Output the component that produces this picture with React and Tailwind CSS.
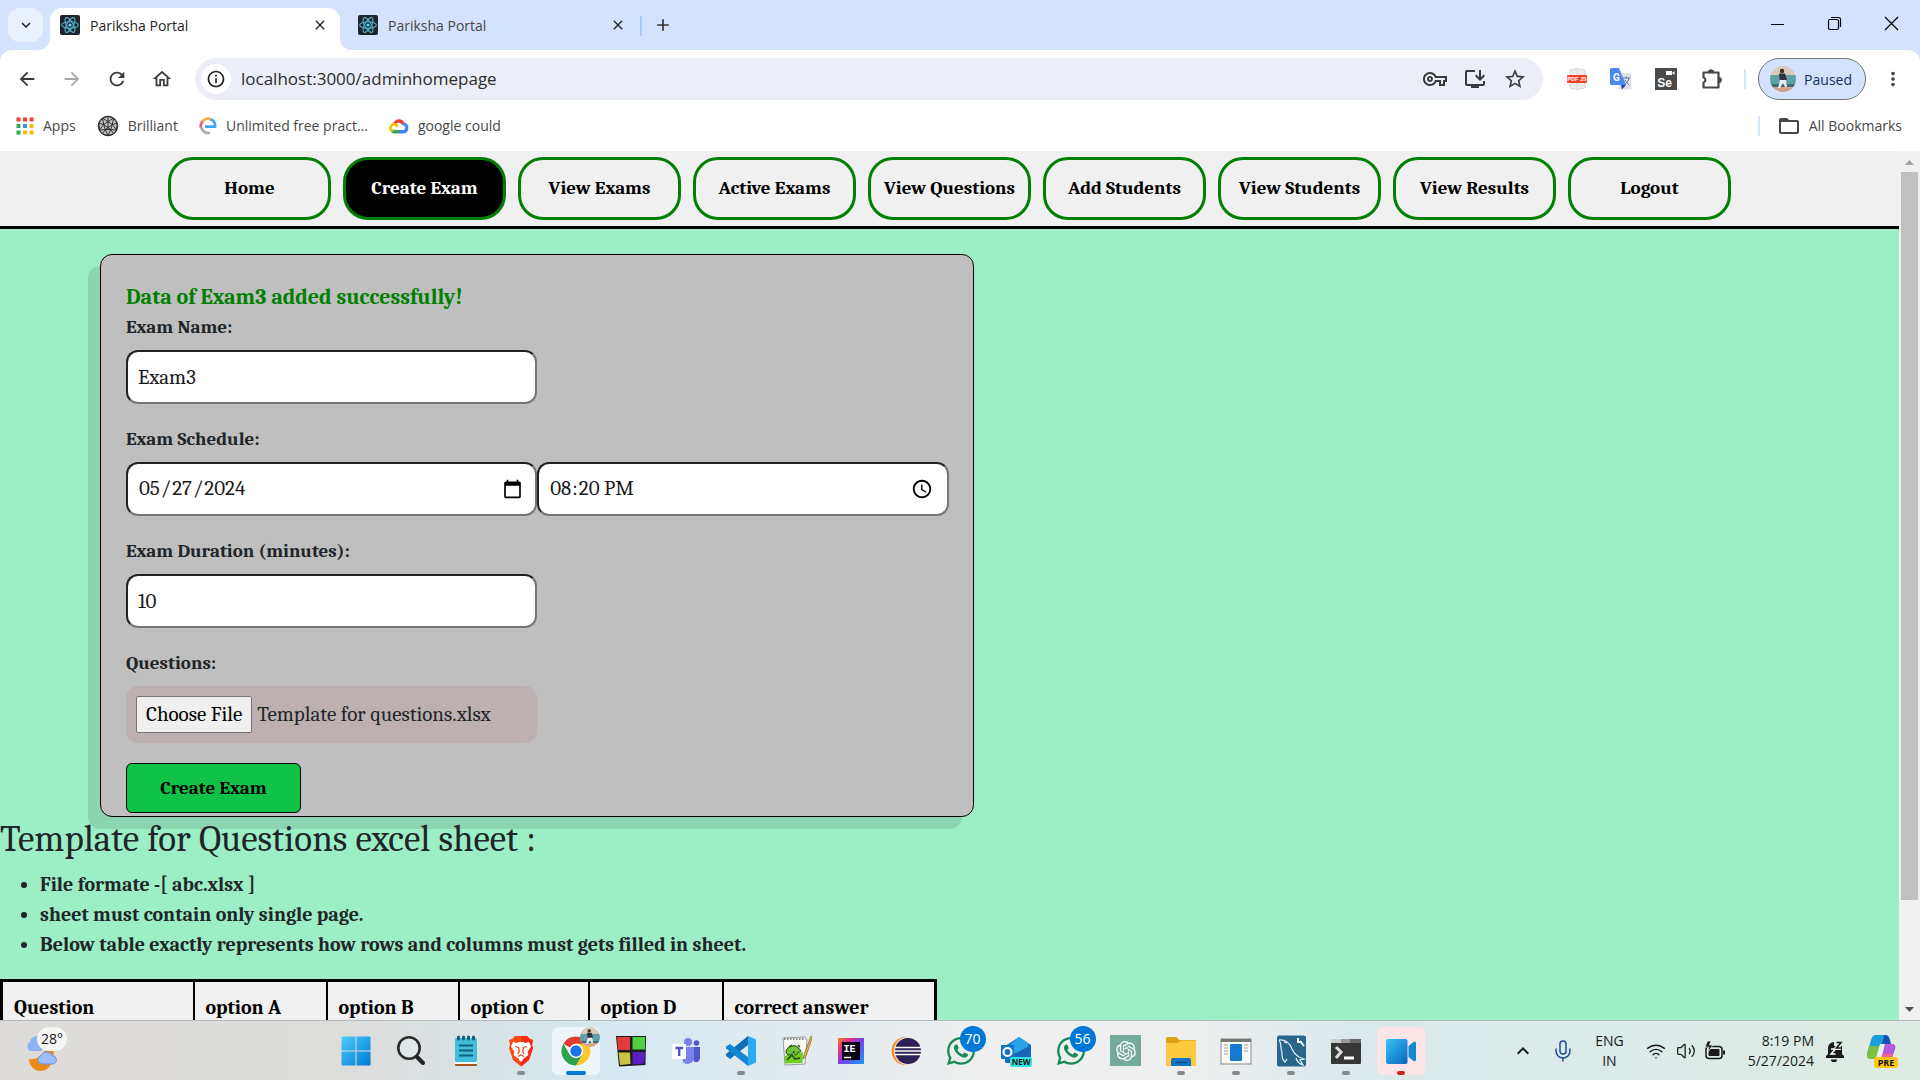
import React from "react";
import {
  MdArrowBack, MdArrowForward, MdRefresh, MdOutlineHome, MdInfoOutline, MdOutlineVpnKey,
  MdInstallDesktop, MdStarBorder, MdMoreVert, MdFolderOpen, MdClose, MdAdd,
  MdKeyboardArrowDown, MdKeyboardArrowUp,
} from "react-icons/md";
import { FaWhatsapp } from "react-icons/fa";
import { RiOpenaiFill } from "react-icons/ri";
import { Mic, Wifi, Volume2 } from "lucide-react";

const ReactFavicon = () => (
  <svg viewBox="0 0 20 20" className="size-5 shrink-0" aria-hidden="true">
    <rect width="20" height="20" rx="2" fill="#20232a" />
    <g fill="none" stroke="#4fb4cf" strokeWidth="1.1">
      <ellipse cx="10" cy="10" rx="8.3" ry="3.2" />
      <ellipse cx="10" cy="10" rx="8.3" ry="3.2" transform="rotate(60 10 10)" />
      <ellipse cx="10" cy="10" rx="8.3" ry="3.2" transform="rotate(120 10 10)" />
    </g>
    <circle cx="10" cy="10" r="1.6" fill="#61dafb" />
  </svg>
);

const AppsIcon = () => {
  const colors = ["#ea4335", "#ea4335", "#ea4335", "#34a853", "#4285f4", "#fbbc04", "#34a853", "#fbbc04", "#fbbc04"];
  return (
    <svg viewBox="0 0 18 18" className="size-[18px]" aria-hidden="true">
      {colors.map((c, i) => (
        <rect key={i} x={(i % 3) * 6.5 + 0.5} y={Math.floor(i / 3) * 6.5 + 0.5} width="4" height="4" fill={c} />
      ))}
    </svg>
  );
};

const BrilliantIcon = () => (
  <svg viewBox="0 0 22 22" className="size-[22px]" fill="none" stroke="#222" strokeWidth="0.9" aria-hidden="true">
    <circle cx="11" cy="11" r="9.8" fill="#c4c4c4" />
    <path d="M11 6.5l4.300 3.100-1.600 5H8.300l-1.600-5zM11 1.400v5.100M20 8l-4.700 1.600M16.600 18.800l-2.900-4.200M5.400 18.800l2.900-4.200M2 8l4.700 1.600M5.500 3.300L11 6.500l5.500-3.200M19.500 15l-4.200-5.400 1.200-6.300M11 20.500l2.700-5.900L19.500 15M2.500 15l5.800-.4 2.700 5.900M5.500 3.300l1.200 6.300L2.500 15" />
    <path d="M11 6.500v8M6.700 9.600l7 5M15.300 9.600l-7 5M2 8l3.500-4.700L11 1.400l5.500 1.900L20 8l-.5 7-2.900 3.800-5.600 1.700-5.600-1.700L2.500 15z" />
  </svg>
);

const EIcon = () => (
  <svg viewBox="0 0 18 18" className="size-[18px]" fill="none" strokeWidth="2.7" aria-hidden="true">
    <path d="M2 11A7 7 0 0 1 4 4" stroke="#ee5a8c" />
    <path d="M3.500 4.500A7 7 0 0 1 12 2.300" stroke="#fbb03b" />
    <path d="M11.500 2.200A7 7 0 0 1 16 9.600H6" stroke="#3fa9f5" />
    <path d="M2.200 10.500A7 7 0 0 0 11 15.700" stroke="#b3a9b0" />
  </svg>
);

const CloudIcon = () => (
  <svg viewBox="0 0 20 17" className="h-[17px] w-5" aria-hidden="true">
    <path d="M4.500 6A6 6 0 0 1 15.300 5.400L12.800 7.800A3.500 3.500 0 0 0 7 6.800z" fill="#ea4335" />
    <path d="M15.300 5.400A5.700 5.700 0 0 1 14.700 16.500H10v-3.600h4.700A2.200 2.200 0 0 0 15.300 9l-2.500-1.300z" fill="#4285f4" />
    <path d="M10 16.500H5.400a5.400 5.400 0 0 1-3.200-1L4.700 12.700l5.300.2z" fill="#34a853" />
    <path d="M2.200 15.500A5.400 5.400 0 0 1 4.500 6c2.200-.1 4 .8 5.200 2.700L7.300 11A2.200 2.200 0 1 0 4.700 12.900z" fill="#fbbc04" />
  </svg>
);

const PdfIcon = () => (
  <svg viewBox="0 0 20 22" className="h-[22px] w-5" aria-hidden="true">
    <path d="M3 2l7-1.500L18 2v18l-8 1.500L3 20z" fill="#ededed" stroke="#d8d8d8" />
    <path d="M10 1v20" stroke="#dcdcdc" />
    <rect x="0" y="7" width="20" height="8" rx="1" fill="#f0422a" />
    <text x="10" y="13" fontSize="5.500" fontWeight="700" fill="#fff" textAnchor="middle" fontFamily="Liberation Sans">PDF JS</text>
  </svg>
);

const TranslateIcon = () => (
  <svg viewBox="0 0 22 22" className="size-[22px]" aria-hidden="true">
    <rect x="9" y="5" width="12.500" height="16.500" rx="1" fill="#dfe3e8" />
    <path d="M11 17h5l-4 4.500z" fill="#3040b0" />
    <path d="M1.500 0H9l7 17H1.500A1.500 1.500 0 0 1 0 15.500v-14A1.500 1.500 0 0 1 1.500 0z" fill="#4a87f0" />
    <text x="6.500" y="12.500" fontSize="10" fontWeight="700" fill="#fff" textAnchor="middle" fontFamily="Roboto">G</text>
    <path d="M13 10h7M16.500 8.500V10M19 10c-.5 3-2.500 5-4 6M15 12c1 2 3 4 4.500 5" stroke="#5b7c99" fill="none" />
  </svg>
);

const SeleniumIcon = () => (
  <svg viewBox="0 0 22 22" className="size-[22px]" aria-hidden="true">
    <rect width="22" height="22" fill="#4a4a4a" />
    <path d="M11 3h6v4h-6zM17 5l2.500-2v4z" fill="#fff" />
    <text x="9.500" y="19" fontSize="12" fontWeight="700" fill="#fff" textAnchor="middle" fontFamily="Liberation Sans">Se</text>
  </svg>
);

const ExtensionIcon = () => (
  <svg viewBox="0 0 24 24" className="size-6" fill="none" stroke="currentColor" strokeWidth="2.200" strokeLinejoin="round" aria-hidden="true">
    <path d="M3.500 5.500H9a2 2 0 0 1 4 0h5.500V11a2 2 0 0 1 0 4v5.500h-15v-5a2.600 2.600 0 0 0 0-5z" />
    <path d="M9 5.500a2 2 0 0 1 4 0zM18.500 11a2 2 0 0 1 0 4z" fill="currentColor" />
  </svg>
);

const Avatar = ({ className }) => (
  <svg viewBox="0 0 26 26" className={className} aria-hidden="true">
    <clipPath id="avatar-clip"><circle cx="13" cy="13" r="13" /></clipPath>
    <g clipPath="url(#avatar-clip)">
      <rect width="26" height="26" fill="#d8c9b8" />
      <rect y="9" width="26" height="9" fill="#5fa0a6" />
      <rect y="18" width="26" height="3" fill="#3c6c74" />
      <rect y="21" width="26" height="5" fill="#d2a58b" />
      <circle cx="12" cy="5" r="2.200" fill="#3a2a26" />
      <path d="M9 7.500h6l2 6-4 2h-3z" fill="#2b3440" />
      <path d="M10 14h6l1 7h-2l-2-4-3 5H8z" fill="#e8ecef" />
    </g>
  </svg>
);

const BrowserTab = ({ active }) => (
  <div className={active ? "relative mt-2 flex h-[42px] w-[290px] items-center rounded-t-xl bg-white pb-2 pl-[10px] pr-3" : "mt-2 flex h-[42px] w-[300px] items-center pb-2 pl-[18px] pr-[14px]"}>
    {active && (
      <>
        <span className="absolute -left-3 bottom-0 size-3 overflow-hidden bg-white"><span className="block size-full rounded-br-xl bg-[#d3e2fd]" /></span>
        <span className="absolute -right-3 bottom-0 size-3 overflow-hidden bg-white"><span className="block size-full rounded-bl-xl bg-[#d3e2fd]" /></span>
      </>
    )}
    <ReactFavicon />
    <span className={active ? "ml-[10px] flex-1 text-[14px] text-[#1f1f1f]" : "ml-[10px] flex-1 text-[14px] text-[#474747]"}>Pariksha Portal</span>
    <button aria-label="Close tab" className="text-[#222]"><MdClose className="size-4" /></button>
  </div>
);

const Bookmark = ({ icon, children }) => (
  <a href="#" className="flex items-center gap-[9px]">{icon}<span>{children}</span></a>
);

const BrowserChrome = () => (
  <header className="shrink-0 bg-[#d3e2fd] font-['Open_Sans',sans-serif]">
    <div className="flex h-[50px] items-start">
      <button aria-label="Search tabs" className="ml-2 mr-[7px] mt-2 flex h-[34px] w-[35px] items-center justify-center rounded-xl bg-[#e9f1fe] text-[#1f1f1f]">
        <MdKeyboardArrowDown className="size-[18px]" />
      </button>
      <BrowserTab active />
      <BrowserTab />
      <span className="mt-4 h-5 w-[2px] bg-[#a8c7fa]" />
      <button aria-label="New tab" className="ml-[11px] mt-[15px] text-[#333]"><MdAdd className="size-5" /></button>
      <div className="ml-auto mt-4 flex gap-[42px] pr-[21px] text-black">
        <button aria-label="Minimize"><svg viewBox="0 0 15 15" className="size-[15px]" fill="none" stroke="currentColor"><path d="M1 8.500h13" /></svg></button>
        <button aria-label="Restore"><svg viewBox="0 0 15 15" className="size-[15px]" fill="none" stroke="currentColor" strokeWidth="1.200"><rect x="1.500" y="3.500" width="10" height="10" rx="1.500" /><path d="M4 1.500h7.500a2 2 0 0 1 2 2V11" /></svg></button>
        <button aria-label="Close window"><svg viewBox="0 0 15 15" className="size-[15px]" fill="none" stroke="currentColor" strokeWidth="1.200"><path d="M1 1l13 13M14 1L1 14" /></svg></button>
      </div>
    </div>
    <div className="rounded-t-xl bg-white">
      <div className="flex items-center pl-4 pr-4 pt-2">
        <nav aria-label="Browser" className="flex gap-[23px] text-[#3a3a3a]">
          <button aria-label="Back"><MdArrowBack className="size-[22px]" /></button>
          <button aria-label="Forward" className="text-[#a8a8a8]"><MdArrowForward className="size-[22px]" /></button>
          <button aria-label="Reload"><MdRefresh className="size-[22px]" /></button>
          <button aria-label="Home"><MdOutlineHome className="size-[22px]" /></button>
        </nav>
        <div className="ml-[22px] flex h-[42px] flex-1 items-center rounded-full bg-[#ebeef7] pl-[6px] pr-4 text-[#3a3a3a]">
          <span className="flex size-[30px] items-center justify-center rounded-full bg-white text-[#1f1f1f]"><MdInfoOutline className="size-5" /></span>
          <input aria-label="Address" defaultValue="localhost:3000/adminhomepage" className="ml-[10px] flex-1 bg-transparent text-[17px] text-[#2c2c2c] outline-none" />
          <div className="flex gap-4">
            <MdOutlineVpnKey className="size-6" />
            <MdInstallDesktop className="size-6" />
            <MdStarBorder className="size-6" />
          </div>
        </div>
        <div className="ml-6 flex items-center gap-[23px] text-[#474747]">
          <PdfIcon /><TranslateIcon /><SeleniumIcon /><ExtensionIcon />
        </div>
        <span className="ml-5 h-5 w-[2px] bg-[#d3e2fd]" />
        <button className="ml-3 flex h-[42px] items-center gap-2 rounded-full border border-[#747775] bg-[#d3e2fd] pl-[11px] pr-[13px] text-[14px] text-[#12305f]">
          <Avatar className="size-[26px]" />Paused
        </button>
        <button aria-label="Menu" className="ml-4 text-[#474747]"><MdMoreVert className="size-[22px]" /></button>
      </div>
      <div className="flex h-[51px] items-center gap-[21px] pl-4 pr-[18px] text-[14px] text-[#474747]">
        <Bookmark icon={<AppsIcon />}>Apps</Bookmark>
        <Bookmark icon={<BrilliantIcon />}>Brilliant</Bookmark>
        <Bookmark icon={<EIcon />}>Unlimited free pract...</Bookmark>
        <Bookmark icon={<CloudIcon />}>google could</Bookmark>
        <span className="ml-auto h-5 w-[2px] bg-[#d3e2fd]" />
        <a href="#" className="-ml-1 flex items-center gap-2"><MdFolderOpen className="size-6" />All Bookmarks</a>
      </div>
    </div>
  </header>
);

const navItems = ["Home", "Create Exam", "View Exams", "Active Exams", "View Questions", "Add Students", "View Students", "View Results", "Logout"];

const PortalNav = () => (
  <nav aria-label="Portal" className="flex justify-center gap-3 border-b-[3px] border-black bg-[#f0f0f0] py-[6px]">
    {navItems.map((item) => (
      <button key={item} className={item === "Create Exam"
        ? "h-[63px] w-[163px] whitespace-nowrap rounded-[25px] border-[3px] border-[#008000] bg-black text-[19px] font-bold text-white"
        : "h-[63px] w-[163px] whitespace-nowrap rounded-[25px] border-[3px] border-[#008000] text-[19px] font-bold text-black"}>
        {item}
      </button>
    ))}
  </nav>
);

const fieldClass = "h-[54px] w-1/2 rounded-xl border-2 border-b-[#767676] border-l-[#212121] border-r-[#767676] border-t-[#212121] bg-white px-[10px] text-[21px] text-[#1a1a1a]";

const ExamForm = () => (
  <form onSubmit={(e) => e.preventDefault()} className="ml-[100px] mt-[25px] w-[46%] rounded-xl border border-black bg-[#bebfbe] pb-[3px] pl-[25px] pr-6 pt-[26px] shadow-[-12px_12px_0_0_rgba(0,0,0,0.1)]">
    <p className="text-[22px] font-bold leading-[32px] text-[#008000]">Data of Exam3 added successfully!</p>
    <label htmlFor="exam-name" className="mb-2 block text-[19px] font-bold leading-[29px]">Exam Name:</label>
    <input id="exam-name" defaultValue="Exam3" className={fieldClass} />
    <label htmlFor="exam-date" className="mb-2 mt-[21px] block text-[19px] font-bold leading-[29px]">Exam Schedule:</label>
    <div className="flex">
      <input id="exam-date" type="date" defaultValue="2024-05-27" className={fieldClass} />
      <input aria-label="Exam time" type="time" defaultValue="20:20" className={fieldClass} />
    </div>
    <label htmlFor="exam-duration" className="mb-2 mt-[21px] block text-[19px] font-bold leading-[29px]">Exam Duration (minutes):</label>
    <input id="exam-duration" defaultValue="10" className={fieldClass} />
    <label htmlFor="exam-file" className="mb-2 mt-[21px] block text-[19px] font-bold leading-[29px]">Questions:</label>
    <label className="relative flex h-[57px] w-1/2 items-center gap-[5px] rounded-xl bg-[#bcb1b0] px-[10px] text-[21px]">
      <input id="exam-file" type="file" className="sr-only" />
      <span className="flex h-[37px] items-center whitespace-nowrap rounded-[2px] border border-[#767676] bg-[#efefef] px-[9px] text-black">Choose File</span>
      <span className="whitespace-nowrap">Template for questions.xlsx</span>
    </label>
    <button className="mt-5 block h-[50px] w-[175px] rounded-md border border-black bg-[#10c245] text-[19px] font-bold text-black">Create Exam</button>
  </form>
);

const TemplateHelp = () => (
  <section>
    <h2 className="text-[37px] leading-[44px]">Template for Questions excel sheet :</h2>
    <ul className="mt-[9px] list-disc pl-10 text-[20px] font-bold leading-[30px]">
      <li>File formate -[ abc.xlsx ]</li>
      <li>sheet must contain only single page.</li>
      <li>Below table exactly represents how rows and columns must gets filled in sheet.</li>
    </ul>
    <table className="mt-[19px] w-[937px] table-fixed border-collapse border-[3px] border-black text-left text-[20px] text-black">
      <thead>
        <tr className="bg-[#f1f1f1]">
          <th className="w-[192px] border-2 border-black px-[11px] py-[11px]">Question</th>
          <th className="w-[133px] border-2 border-black px-[11px] py-[11px]">option A</th>
          <th className="w-[132px] border-2 border-black px-[11px] py-[11px]">option B</th>
          <th className="w-[130px] border-2 border-black px-[11px] py-[11px]">option C</th>
          <th className="w-[134px] border-2 border-black px-[11px] py-[11px]">option D</th>
          <th className="border-2 border-black px-[11px] py-[11px]">correct answer</th>
        </tr>
      </thead>
    </table>
  </section>
);

const ScrollBar = () => (
  <div className="flex w-[21px] shrink-0 flex-col items-center bg-[#f1f1f1]" aria-hidden="true">
    <svg viewBox="0 0 21 21" className="size-[21px]"><path d="M6 14l4.500-5 4.500 5z" fill="#a3a3a3" /></svg>
    <div className="flex w-full flex-1 flex-col px-[2px]">
      <div className="w-full grow-[88] bg-[#c1c1c1]" />
      <div className="grow-[12]" />
    </div>
    <svg viewBox="0 0 21 21" className="size-[21px]"><path d="M6 8l4.500 5L15 8z" fill="#505050" /></svg>
  </div>
);

const Svg = ({ children }) => <svg viewBox="0 0 32 32" className="size-8" aria-hidden="true">{children}</svg>;

const StartIcon = () => (
  <Svg>
    <defs><linearGradient id="win" x1="0" y1="0" x2="1" y2="1"><stop stopColor="#4bccfb" /><stop offset="1" stopColor="#0078d4" /></linearGradient></defs>
    <path d="M1.500 2.500a1 1 0 0 1 1-1h13v14h-14zM16.500 1.500h13a1 1 0 0 1 1 1v13h-14zM1.500 16.500h14v14h-13a1 1 0 0 1-1-1zM16.500 16.500h14v13a1 1 0 0 1-1 1h-13z" fill="url(#win)" />
  </Svg>
);
const SearchIcon = () => <Svg><circle cx="14" cy="13" r="10.700" fill="#e1e8eb" stroke="#2a2a2a" strokeWidth="2.600" /><path d="M22 22l6 6" stroke="#222" strokeWidth="4" strokeLinecap="round" /></Svg>;
const NotepadIcon = () => (
  <Svg>
    <rect x="5" y="27" width="22" height="4" rx="1" fill="#a3561b" /><rect x="5" y="26" width="22" height="3" fill="#fff" />
    <rect x="5" y="3" width="22" height="24" rx="1.500" fill="#42bddb" />
    <path d="M8.500 2v2M13.500 2v2M18.500 2v2M23.500 2v2" stroke="#126080" strokeWidth="3" strokeLinecap="round" />
    <path d="M9 10.500h14M9 15.500h14M9 20.500h14" stroke="#0b617d" strokeWidth="2" />
  </Svg>
);
const BraveIcon = () => (
  <Svg>
    <path d="M10 1h12l3 3 3 1-1 5 1 3-4 12-8 6.500L8 25 4 13l1-3-1-5 3-1z" fill="#fb4a14" />
    <path d="M16 1h6l3 3 3 1-1 5 1 3-4 12-8 6.500z" fill="#f52c14" />
    <path d="M8 7l4 1 2-1h4l2 1 4-1 2 4.500-3.500 5.500 1 3-4 3-3.500 2-3.500-2-4-3 1-3L6 11.500z" fill="#fff" />
    <path d="M10 11.500l3.500 1 .8 4-1.500 2.500M22 11.500l-3.500 1-.8 4 1.500 2.500M13 21.500l3-1.500 3 1.500" fill="none" stroke="#f5401a" strokeWidth="1.300" />
    <path d="M13.500 24.500L16 23.500l2.500 1L16 27z" fill="#fff" />
  </Svg>
);
const ChromeIcon = () => (
  <span className="relative block size-8">
    <Svg>
      <path d="M16 16L3.400 8.700A14.500 14.500 0 0 1 28.600 8.700H16z" fill="#e33b2e" />
      <path d="M16 9h12.600A14.500 14.500 0 0 1 16 30.500l6.300-11z" fill="#fdc629" />
      <path d="M3.400 8.700A14.500 14.500 0 0 0 16 30.500l6.300-10.900-6.300 3.500-6.300-3.500z" fill="#2da14c" />
      <circle cx="16" cy="16" r="7.200" fill="#fff" /><circle cx="16" cy="16" r="5.700" fill="#1b73e8" />
    </Svg>
    <Avatar className="absolute -right-2 -top-2 size-5" />
  </span>
);
const BlocksIcon = () => (
  <Svg>
    <path d="M1 1h30l-.5 29L4 31.500z" fill="#1d1a1a" />
    <path d="M2 2h13v13H3z" fill="#de3b3b" /><path d="M17.500 2H30v12.500H17.500z" fill="#4fd044" />
    <path d="M3.500 17.500H15l.5 11.500L5 30z" fill="#c9c341" /><path d="M17.500 17H30l-.5 11.500-12 1z" fill="#5a1fc0" />
  </Svg>
);
const TeamsIcon = () => (
  <Svg>
    <circle cx="18" cy="7" r="4" fill="#7b83eb" /><circle cx="26.500" cy="8" r="2.800" fill="#5059c9" />
    <path d="M20 12h10v10a4 4 0 0 1-6 4.500z" fill="#5059c9" /><path d="M11 12h13v11a6.500 6.500 0 0 1-11 4z" fill="#7b83eb" />
    <rect x="2" y="9" width="14" height="15" rx="1" fill="#fff" /><path d="M5.500 13h7.500M9.200 13v8" stroke="#4b53bc" strokeWidth="2.300" />
  </Svg>
);
const CodeIcon = () => (
  <Svg>
    <path d="M23 1v9L5 24l-4-3v-2z" fill="#0e70b8" /><path d="M1 11.500L5 9l18 13v9L1 13.500z" fill="#1587d0" />
    <path d="M23 1l8 3.500v23L23 31z" fill="#2aaaf2" />
  </Svg>
);
const NotepadPlusIcon = () => (
  <Svg>
    <path d="M3 3l22-1 2 3-2 24-20 1z" fill="#f7f7f3" stroke="#999" />
    <path d="M5 21c7-3 13-2 18-4l-.5 11L5 28.500z" fill="#6fce1b" />
    <path d="M6 17c0-6 11-9 13-3 3 1 2 4-1 3-1 5-5 3-4-1-2 5-8 5-8 1z" fill="#71c437" stroke="#23420d" />
    <path d="M7 25l5-5 3 4 5-1M9 12l3-2M18 10l2 2" stroke="#23420d" strokeWidth="1.300" fill="none" />
    <path d="M4 4h20" stroke="#666" strokeWidth="1.500" strokeDasharray="1.500 1.500" />
    <path d="M31 1L24 20l-1 4 3-3L32.500 2z" fill="#e3b44c" stroke="#8b5d1c" strokeWidth=".7" />
  </Svg>
);
const IdeaIcon = () => (
  <Svg>
    <defs><linearGradient id="idea" x1="0" y1="0" x2="1" y2="1"><stop stopColor="#fb7b26" /><stop offset=".25" stopColor="#e8308a" /><stop offset=".5" stopColor="#7a3ee8" /><stop offset="1" stopColor="#139af5" /></linearGradient></defs>
    <rect x="3" y="3" width="26" height="26" fill="url(#idea)" /><rect x="7" y="7" width="18" height="18" fill="#090212" />
    <text x="8.500" y="17" fontSize="10" fontWeight="700" fill="#fff" fontFamily="Liberation Mono">IE</text>
    <path d="M9 22.500h7" stroke="#fff" strokeWidth="1.500" />
  </Svg>
);
const EclipseIcon = () => <Svg><circle cx="15.500" cy="16" r="14" fill="#f7941e" /><circle cx="18" cy="16" r="14" fill="#e9e6ee" /><circle cx="18" cy="16" r="13" fill="#2c2255" /><path d="M5 12.500h26M5 16h26M5 19.500h26" stroke="#fff" strokeWidth="1.700" /></Svg>;
const WhatsappBadge = ({ count }) => (
  <span className="relative block size-8">
    <FaWhatsapp className="size-8 text-[#178b54]" />
    <span className="absolute -right-[9px] -top-[9px] flex size-[26px] items-center justify-center rounded-full bg-[#0078d7] text-[14px] text-white">{count}</span>
  </span>
);
const OutlookIcon = () => (
  <Svg>
    <path d="M5 11L19 2l12 8v17H5z" fill="#1674c5" /><path d="M9 11L19 2l9 6v10H9z" fill="#2ba2e8" /><path d="M13 20l18-10v18H5z" fill="#1666b5" />
    <rect x="1" y="10" width="13" height="14" rx="1" fill="#1173c7" /><circle cx="7.500" cy="17" r="4" fill="none" stroke="#fff" strokeWidth="2.200" />
    <rect x="10" y="22" width="22" height="10" rx="2" fill="#30e5df" /><text x="21" y="29.800" fontSize="8" fontWeight="700" textAnchor="middle" fill="#111" fontFamily="Open Sans">NEW</text>
  </Svg>
);
const GptIcon = () => <span className="flex size-[31px] items-center justify-center bg-[#74aa9c]"><RiOpenaiFill className="size-6 text-white" /></span>;
const FolderIcon = () => (
  <Svg>
    <path d="M1 3.500A1.500 1.500 0 0 1 2.500 2h9L14 5h17v7H1z" fill="#dda116" /><path d="M1 8h12l3-2.500h15V31H1z" fill="#fcc93f" />
    <path d="M6 31v-6a2 2 0 0 1 2-2h16a2 2 0 0 1 2 2v6z" fill="#1274c8" /><path d="M10 27.500h12" stroke="#0b4b8a" strokeWidth="1.500" />
  </Svg>
);
const WindowIcon = () => (
  <Svg>
    <rect x="1" y="4" width="30" height="25" fill="#fafafa" stroke="#8a8a8a" /><rect x="1" y="4" width="30" height="3" fill="#777" />
    <path d="M4 10h4M4 13h4M4 16h4M4 19h4M24 10h4M24 13h4M24 16h4" stroke="#999" /><rect x="10" y="9" width="12" height="17" rx="1" fill="#1779cf" />
  </Svg>
);
const MysqlIcon = () => (
  <Svg>
    <rect x="2" y="0.500" width="29" height="31" rx="2" fill="#28668c" />
    <path d="M4 5c6-1 11 3 13 9 2 5 4 6 7 8l5 2-4 1 3 5c-3-1-6-3-7-7M4 5c3 4 1 8 3 12 0 4-1 6 3 10l2-3M9 7l3 1" fill="none" stroke="#e6f0f5" strokeWidth="1.200" />
    <path d="M23 3v4h4M25 6l4 5" stroke="#fff" strokeWidth="2" fill="none" />
  </Svg>
);
const TerminalIcon = () => (
  <Svg>
    <rect x="1" y="4" width="30" height="25" rx="1" fill="#363636" /><rect x="1" y="4" width="10" height="4" fill="#ccc" /><rect x="11" y="4" width="9" height="4" fill="#999" /><rect x="20" y="4" width="11" height="4" fill="#666" />
    <path d="M6 12l5 5-5 6" fill="none" stroke="#ddd" strokeWidth="3" /><path d="M14 23h10" stroke="#fff" strokeWidth="3" />
  </Svg>
);
const CameraIcon = () => (
  <Svg>
    <defs><linearGradient id="cam" x1="0" y1="0" x2="1" y2="1"><stop stopColor="#35c4f2" /><stop offset="1" stopColor="#0c64c0" /></linearGradient></defs>
    <path d="M23.500 11l5-4c1-.6 2.500-.3 2.500 1v17c0 1-1.500 1.600-2.500 1l-5-4z" fill="#0d8ad0" /><rect x="1" y="4" width="21.500" height="25" rx="2" fill="url(#cam)" />
  </Svg>
);

const apps = [
  ["Start", <StartIcon />], ["Search", <SearchIcon />], ["Notepad", <NotepadIcon />], ["Brave", <BraveIcon />, "idle"],
  ["Chrome", <ChromeIcon />, "active"], ["Blocks", <BlocksIcon />], ["Teams", <TeamsIcon />], ["VS Code", <CodeIcon />, "idle"],
  ["Notepad++", <NotepadPlusIcon />], ["IntelliJ IDEA", <IdeaIcon />], ["Eclipse", <EclipseIcon />], ["WhatsApp", <WhatsappBadge count="70" />],
  ["Outlook", <OutlookIcon />], ["WhatsApp 2", <WhatsappBadge count="56" />], ["ChatGPT", <GptIcon />], ["File Explorer", <FolderIcon />, "idle"],
  ["Window", <WindowIcon />, "idle"], ["MySQL Workbench", <MysqlIcon />, "idle"], ["Terminal", <TerminalIcon />, "idle"], ["Recorder", <CameraIcon />, "alert"],
];
const tileClass = {
  active: "relative flex size-12 items-center justify-center rounded-md bg-[#eef5fa]",
  alert: "relative flex size-12 items-center justify-center rounded-md bg-[#fce5e7]",
  idle: "relative flex size-12 items-center justify-center",
  none: "relative flex size-12 items-center justify-center",
};
const markClass = {
  active: "absolute bottom-0 h-1 w-5 rounded-full bg-[#0078d7]",
  alert: "absolute bottom-0 h-1 w-2 rounded-full bg-[#c8281e]",
  idle: "absolute bottom-0 h-1 w-2 rounded-full bg-[#868a8c]",
};

const Weather = () => (
  <div className="relative ml-[22px] h-10 w-10">
    <svg viewBox="0 0 40 40" className="size-10" aria-hidden="true">
      <path d="M24 17a9 9 0 0 1 8 4l-2 8a10 10 0 0 1-23-1c6 1 14-2 17-11z" fill="#ee8a1a" />
      <path d="M8 20a5 5 0 0 1 0-9 7 7 0 0 1 12-4v13z" fill="#8fb4f5" />
      <path d="M19 33a4.500 4.500 0 0 1 0-8.500 6 6 0 0 1 11 0 4.300 4.300 0 0 1 1 8.500z" fill="#9dbdf8" stroke="#6b93e2" />
    </svg>
    <span className="absolute -right-[5px] -top-1 flex h-6 items-center rounded-full bg-[#f5f5f4] px-1 text-[14px]">28°</span>
  </div>
);

const TaskBar = () => (
  <footer className="flex h-[60px] shrink-0 items-center border-t border-[#b2b8bb] bg-[linear-gradient(90deg,#dedcd8_0%,#dddddb_18%,#d5e8f0_32%,#e2ebef_42%,#efefef_52%,#eeefef_62%,#dce9ec_70%,#dceae9_85%,#deebe2_100%)] font-['Open_Sans',sans-serif] text-[#1a1a1a]">
    <div className="grow-2 basis-0"><Weather /></div>
    <div className="flex">
      {apps.map(([name, icon, state = "none"]) => (
        <button key={name} aria-label={name} className="flex w-[55px] justify-center">
          <span className={tileClass[state]}>{icon}{state !== "none" && <span className={markClass[state]} />}</span>
        </button>
      ))}
    </div>
    <div className="flex grow-3 basis-0 items-center justify-end text-[14px] leading-[20px]">
      <MdKeyboardArrowUp className="size-6" />
      <Mic className="ml-4 size-6 text-[#1f4e9e]" strokeWidth={1.5} />
      <div className="ml-5 text-center">ENG<br />IN</div>
      <Wifi className="ml-[22px] size-5" strokeWidth={1.7} />
      <Volume2 className="ml-[10px] size-5" strokeWidth={1.5} />
      <svg viewBox="0 0 22 20" className="ml-2 h-5 w-[22px]" aria-hidden="true">
        <rect x="2" y="5.500" width="16" height="12" rx="3" fill="none" stroke="#1a1a1a" strokeWidth="1.500" />
        <rect x="4.500" y="8" width="11" height="7" rx="1" fill="#1a1a1a" /><path d="M19 9.500h2v4h-2z" fill="#1a1a1a" />
        <path d="M3.500 0H7L5.500 4H9l-5 7 1-5H1z" fill="#1a1a1a" stroke="#dceae9" strokeWidth=".8" />
      </svg>
      <div className="ml-[22px] whitespace-nowrap text-right">8:19 PM<br />5/27/2024</div>
      <svg viewBox="0 0 20 22" className="ml-[10px] h-[22px] w-5" aria-hidden="true">
        <path d="M2 18v-2l2-2V8a6 6 0 0 1 6-6v4h8v8l2 2v2zM7 19.500h6a3 3 0 0 1-6 0z" fill="#1a1a1a" />
        <path d="M7 9h4.500L7 14h4.500" stroke="#fff" strokeWidth="1.500" fill="none" />
        <path d="M12.500 2.500H17L12.500 8H17" stroke="#deebe5" strokeWidth="4" fill="none" />
        <path d="M12.500 2.500H17L12.500 8H17" stroke="#1a1a1a" strokeWidth="1.600" fill="none" />
      </svg>
      <svg viewBox="0 0 32 34" className="ml-[22px] mr-[22px] h-[34px] w-8" aria-hidden="true">
        <path d="M10 1h10l-6 20c-1 3-3 4-6 4H5c-3 0-4-2-4-5L5 6c1-3 2-5 5-5z" fill="#1b9edd" />
        <path d="M3 12h13l-2 9c-1 3-3 4-6 4H5c-3 0-4-2-4-5z" fill="#7bc043" />
        <path d="M18 1c5 0 5 2 6 5l1 4h-9z" fill="#1653b5" />
        <path d="M18 10h8c3 0 4 2 3 5l-3 9c-1 3-3 4-6 4h-8c3-1 3-3 4-5z" fill="#b45bdc" />
        <path d="M15 20h12l-1 5c-1 3-3 3-6 3h-8c2-1 3-3 3-8z" fill="#f0629a" />
        <path d="M14 10h5l-4 14h-5z" fill="#e9f0f6" />
        <rect x="8" y="23" width="24" height="11" rx="3" fill="#fcc414" /><text x="20" y="31.800" fontSize="9" fontWeight="700" textAnchor="middle" fill="#111" fontFamily="Open Sans">PRE</text>
      </svg>
    </div>
  </footer>
);

export default function App() {
  return (
    <div className="flex h-screen flex-col overflow-hidden">
      <BrowserChrome />
      <div className="flex min-h-0 flex-1">
        <main className="min-w-0 flex-1 overflow-hidden bg-[#9beec6] font-[Cambria,Caladea,'Liberation_Serif',serif] text-[#212529]">
          <PortalNav />
          <ExamForm />
          <TemplateHelp />
        </main>
        <ScrollBar />
      </div>
      <TaskBar />
    </div>
  );
}
